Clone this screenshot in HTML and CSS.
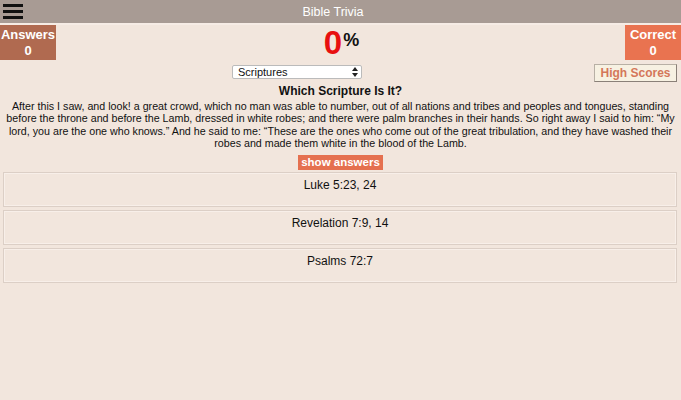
FILE: index.html
```html
<!DOCTYPE html>
<html>
<head>
<meta charset="utf-8">
<link rel="stylesheet" href="styles.css">
</head>
<body>
<header class="topbar">
  <div class="menu">
    <svg width="20" height="18" viewBox="0 0 20 18"><rect x="0" y="2" width="20" height="3" fill="#111"/><rect x="0" y="8" width="20" height="3" fill="#111"/><rect x="0" y="14" width="20" height="3" fill="#111"/></svg>
  </div>
  <div class="title">Bible Trivia</div>
</header>
<div class="scorerow">
  <div class="score answers">Answers<br>0</div>
  <div class="percent"><span class="num">0</span><span class="pct">%</span></div>
  <div class="score correct">Correct<br>0</div>
</div>
<div class="controls">
  <div class="selwrap">
    <div class="select"><span>Scriptures</span><svg width="6" height="10" viewBox="0 0 6 10"><path d="M0 4 L3 0 L6 4 Z M0 6 L3 10 L6 6 Z" fill="#222"/></svg></div>
  </div>
  <div class="hs">High Scores</div>
</div>
<h2 class="question">Which Scripture Is It?</h2>
<p class="verse">After this I saw, and look! a great crowd, which no man was able to number, out of all nations and tribes and peoples and tongues, standing before the throne and before the Lamb, dressed in white robes; and there were palm branches in their hands. So right away I said to him: “My lord, you are the one who knows.” And he said to me: “These are the ones who come out of the great tribulation, and they have washed their robes and made them white in the blood of the Lamb.</p>
<div class="showwrap"><span class="show">show answers</span></div>
<div class="answers-list">
  <div class="ans">Luke 5:23, 24</div>
  <div class="ans">Revelation 7:9, 14</div>
  <div class="ans">Psalms 72:7</div>
</div>
</body>
</html>
```
FILE: styles.css
```css
html, body { margin: 0; padding: 0; }
body {
  background: #f2e6dd;
  font-family: "Liberation Sans", Arial, sans-serif;
  color: #111;
  width: 681px;
  height: 400px;
  overflow: hidden;
}
.topbar {
  height: 23px;
  background: #a89b94;
  border-bottom: 2px solid #f6ece5;
  display: flex;
  align-items: center;
}
.menu { padding-left: 3px; display: flex; align-items: center; height: 23px; }
.menu svg { display: block; margin-top: -2px; }
.title {
  flex: 1;
  text-align: center;
  color: #fff;
  font-size: 12.5px;
  margin-right: 38px;
}
.scorerow {
  display: flex;
  justify-content: space-between;
  align-items: flex-start;
  height: 35px;
}
.score {
  width: 56px;
  height: 35px;
  color: #fff;
  font-weight: bold;
  font-size: 13px;
  line-height: 16px;
  text-align: center;
  box-sizing: border-box;
  padding-top: 2px;
}
.answers { background: #b06a50; }
.correct { background: #e97350; }
.percent {
  display: flex;
  align-items: flex-start;
  margin-left: 2px;
  padding-top: 3px;
}
.num { color: #e81010; font-size: 33px; font-weight: bold; line-height: 30px; }
.pct { font-size: 18px; font-weight: bold; line-height: 18px; margin-left: 1px; margin-top: 3px; }
.controls {
  display: flex;
  justify-content: space-between;
  align-items: flex-start;
  height: 22px;
  padding-top: 4px;
}
.selwrap { flex: 1; display: flex; justify-content: center; }
.select {
  width: 130px;
  height: 14px;
  background: #fff;
  border: 1px solid #bbb;
  border-radius: 2px;
  box-sizing: border-box;
  display: flex;
  align-items: center;
  justify-content: space-between;
  padding: 0 3px 0 5px;
  font-size: 11px;
  margin-top: 1px;
}
.hs {
  width: 83px;
  height: 18px;
  box-sizing: border-box;
  background: #f7f1e2;
  border: 1px solid #b8b0a5;
  border-right-color: #8a8078;
  border-bottom-color: #8a8078;
  color: #d4775a;
  font-weight: bold;
  font-size: 12px;
  line-height: 16px;
  text-align: center;
  margin-right: 4px;
}
.question {
  margin: -2px 0 0;
  text-align: center;
  font-size: 12px;
  font-weight: bold;
  line-height: 15px;
}
.verse {
  margin: 1px 4px 0;
  text-align: center;
  font-size: 10.7px;
  line-height: 12.4px;
}
.showwrap { text-align: center; margin-top: 2px; height: 15px; }
.show {
  display: inline-block;
  background: #e5704f;
  color: #fff;
  font-weight: bold;
  font-size: 11.5px;
  line-height: 15px;
  padding: 0 3px;
}
.answers-list { display: flex; flex-direction: column; gap: 3px; padding: 5px 4px 0 3px; }
.ans {
  height: 35px;
  box-sizing: border-box;
  border: 1px solid #dccfc6;
  box-shadow: inset 0 0 0 1px #f8efe9;
  text-align: center;
  font-size: 12px;
  padding-top: 5px;
}
```
